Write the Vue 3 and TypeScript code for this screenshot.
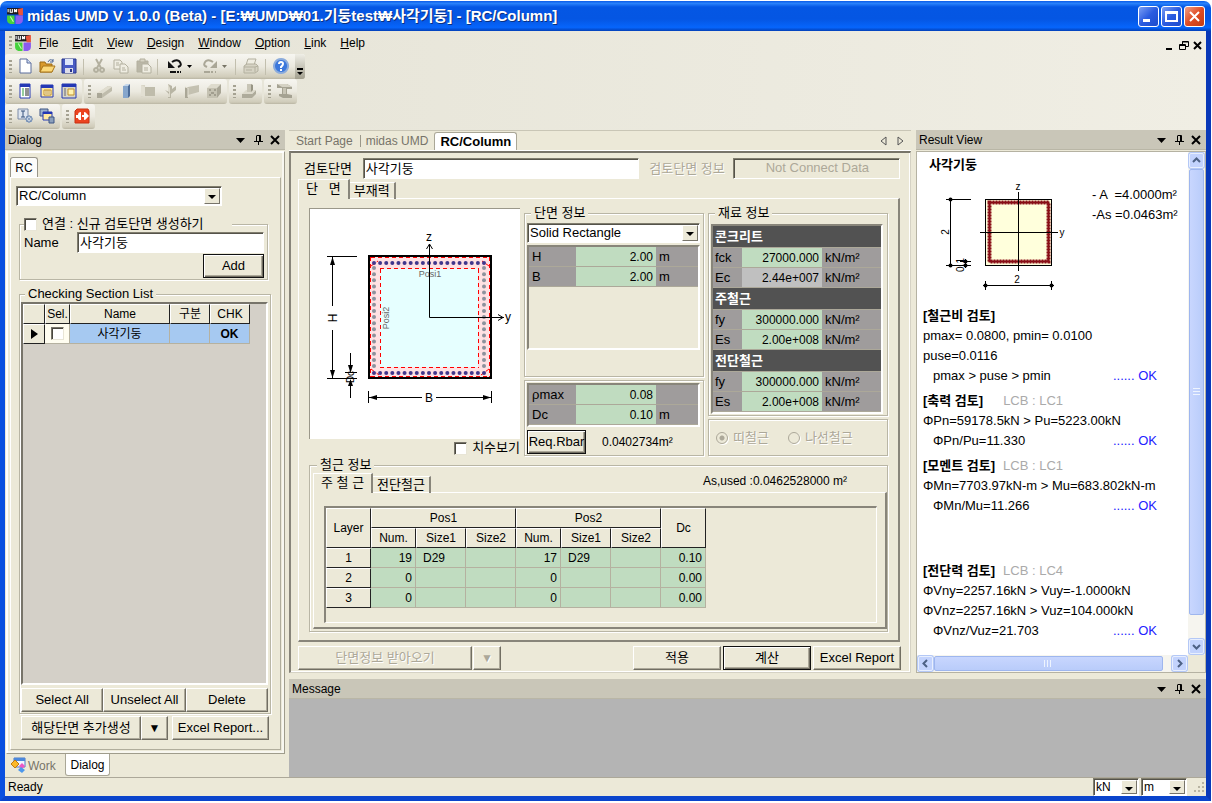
<script setup lang="ts">
import { ref } from 'vue'

type Shape = [d: string, fill: string, stroke?: string]
interface Tool { name: string; shapes: Shape[]; arrow?: boolean; sep?: boolean; off?: boolean }

const G = '#b3b09f'
const L = '#d6d3c4'
const N = 'none'

const logo: Shape[] = [
  ['M1 1h14v6H1z', '#1c1a1c'],
  ['M11 2l5-1v7h-4z', '#e8553c'],
  ['M1 8h7v8H4q-3-1-3-4z', '#46d23c'],
  ['M9 8h7v4q0 3-3 4H9z', '#8a5cf0'],
  ['M2 2v3M4 2v3h2v-3M8 5v-3l1 2l1-2v3', N, '#fff'],
  ['M4 9l3 5', N, '#c8ffb8'],
]

const mainTools: Tool[] = [
  { name: 'New', shapes: [['M3 1h7l4 4v10H3z', '#fff', '#5a6c9c'], ['M10 1v4h4', '#cfdcf4', '#5a6c9c']] },
  { name: 'Open', shapes: [['M1 4h5l1 2h6v8H1z', '#d99a2c', '#9c6a14'], ['M4 8h12l-3 6H1z', '#fbd878', '#a87418'], ['M9 4q2-4 5-1M14 1v3h-3', N, '#4a6494']] },
  { name: 'Save', sep: true, shapes: [['M1 1h14v14H1z', '#4a5cc4', '#27348c'], ['M4 1h8v6H4z', '#dfe7fb'], ['M4 10h8v5H4z', '#dcdce8'], ['M9 11h2v3H9z', '#27348c']] },
  { name: 'Cut', off: true, shapes: [['M5 1l5 9M11 1l-5 9', N, G], ['M5 10a2 2 0 1 0 .1 0zM11 10a2 2 0 1 0 .1 0z', N, G]] },
  { name: 'Copy', off: true, shapes: [['M1 2h6l2 2v7H1z', '#efede2', G], ['M7 6h5l3 3v6H7z', '#efede2', G], ['M3 5h3M3 7h3M9 10h3M9 12h4', N, G]] },
  { name: 'Paste', off: true, sep: true, shapes: [['M2 3h11v11H2z', '#bab7a7', G], ['M5 1h5v3H5z', L, G], ['M7 6h6l3 3v6H7z', '#efede2', G], ['M9 10h4M9 12h4', N, G]] },
  { name: 'Undo', arrow: true, shapes: [['M5 4q4-3 7-1q3 3 1 5l-2 1', N, '#111'], ['M1 3v7h7z', '#111'], ['M3 14h6M10 14h2M13 14h1', N, '#111']] },
  { name: 'Redo', arrow: true, sep: true, off: true, shapes: [['M11 4q-4-3-7-1q-3 3-1 5l2 1', N, '#aaa797'], ['M15 3v7H8z', '#aaa797'], ['M2 14h6M9 14h2M13 14h1', N, '#aaa797']] },
  { name: 'Print', sep: true, off: true, shapes: [['M5 1h8l-2 6H3z', '#efede2', G], ['M1 8l3-2h9l2 2v5l-3 2H1z', L, G], ['M1 9h11v5M12 9l3-1M3 12h6', N, G]] },
  { name: 'Help', shapes: [['M8 1a7 7 0 1 0 .1 0z', '#3c78dc', '#8cacdc'], ['M6 6q0-2 2-2t2 2q0 1-2 3v1M8 11v2', N, '#fff']] },
]

const viewTools: Tool[] = [
  { name: 'Tree view', shapes: [['M3 1h10v14H3z', '#fff', '#2438b4'], ['M3 1h10v3H3z', '#2438b4'], ['M5 6h2M5 8h2M5 10h2M5 12h2', N, '#2c9c3c'], ['M8 6h4M8 8h4M8 10h4M8 12h4', N, '#222']] },
  { name: 'Property view', shapes: [['M2 2h12v12H2z', '#ffe9a0', '#2438b4'], ['M2 2h12v3H2z', '#2438b4'], ['M5 7h7v5H5z', '#fffbe0', '#c0902c'], ['M6 8h5M6 10h5', N, '#c0902c']] },
  { name: 'Layout view', shapes: [['M1 1h14v14H1z', '#d9d6c4', '#2438b4'], ['M1 1h14v3H1z', '#2438b4'], ['M3 6h2M3 8h2M3 10h2M3 12h2', N, '#667'], ['M7 6h6v6H7z', '#fff3b0', '#c0902c']] },
]
const modelTools: Tool[] = [
  { name: 'Beam', off: true, shapes: [['M1 11l11-8l4 1v4L6 15H1z', '#bfbcac'], ['M1 10l11-7l4 1L6 11z', '#e0ddcf'], ['M1 10h5v5H1z', '#aaa797']] },
  { name: 'Column', shapes: [['M5 3l3-2h4l-2 2z', '#c4d6ea'], ['M5 3h5v12H5z', '#86a6cc'], ['M10 3l2-2v12l-2 2z', '#4c6c98']] },
  { name: 'Wall', off: true, shapes: [['M1 2h4v12H1z', '#d8d5c6'], ['M5 4h10v9H5z', '#bfbcab'], ['M1 2l4 2v10l-4-1z', '#e2dfd2']] },
  { name: 'Brace', off: true, shapes: [['M6 1l4 2v3l4-3v4l-5 4v4H6z', '#b8b5a4'], ['M6 1v13h2V5z', '#dedbcd'], ['M3 7l4 2v2z', G]] },
  { name: 'Slab', off: true, shapes: [['M1 4h3v11H1z', '#aaa797'], ['M4 4l11-2v7l-11 3z', '#c4c1b1'], ['M1 4l3 1v9', N, '#e6e3d6']] },
  { name: 'Footing', off: true, shapes: [['M1 5l4-4h10l-4 4z', '#dedbcd'], ['M11 5l4-4v9l-4 5z', '#a8a595'], ['M1 5h10v10H1z', '#c5c2b2'], ['M3 7h2M8 7h2M3 12h2M8 12h2M5 10h3', N, '#7e7b6c']] },
]
const baseTools: Tool[] = [
  { name: 'Base', off: true, shapes: [['M1 11h10l4-4v4l-4 4H1z', '#aeab9b'], ['M1 11l4-4h10l-4 4z', '#dcd9cb'], ['M6 1h4v8H6z', '#c8c5b6'], ['M10 1l2 1v5l-2 2z', '#989585']] },
]
const steelTools: Tool[] = [
  { name: 'Steel', off: true, shapes: [['M1 1h10l5 3v2h-5v5l5 1v3H7l-4-2v-2h3V5H1z', '#a5a292'], ['M1 1h10l5 3H6z', '#d5d2c4'], ['M7 5h3v6H7z', '#c8c5b6']] },
]
const dbTools: Tool[] = [
  { name: 'Section settings', shapes: [['M1 1h10v10H1z', '#dfe6f0', '#7c8ca8'], ['M4 3h4M6 3v6M4 9h4', N, '#34507c'], ['M12 8a3 3 0 1 0 .1 0z', '#fff', '#4c6c9c'], ['M8 11h8M12 7v8M9 8l6 6M15 8l-6 6', N, '#8ca4c4']] },
  { name: 'Cascade', shapes: [['M1 1h8v7H1z', '#9cb0cc', '#3c5484'], ['M4 4h9v8H4z', '#ffe9a0', '#2438b4'], ['M4 4h9v2H4z', '#2438b4'], ['M10 9h5v6h-5z', '#8ca0bc', '#3c5484']] },
]
const linkTools: Tool[] = [
  { name: 'Link', shapes: [['M3 1h11l1 2v12H1V3z', '#ec4420', '#c83010'], ['M7 4v8q-3 0-3-2H2V7h2q0-3 3-3zM10 4q2 0 3 2l2 2l-2 2q-1 2-3 2V9h-2V7h2z', '#fff']] },
]
const workIcon: Shape[] = [['M4 1h11v9H4z', '#eef4ff', '#4c78c4'], ['M4 1h11v3H4z', '#4c88dc'], ['M5 3l4 4l-4 4l-4-4z', '#fbb828', '#c07c10'], ['M12 6l3 3l-3 3l-3-3z', '#ec58c4'], ['M11 10l4 3l-3 3l-4-3z', '#4c98ec']]

const toolRows: Tool[][][] = [[mainTools], [viewTools, modelTools, baseTools, steelTools], [dbTools, linkTools]]
const menus = ['File', 'Edit', 'View', 'Design', 'Window', 'Option', 'Link', 'Help']

const sectionName = ref('사각기둥')
const newName = ref('사각기둥')

const dims = [['H', '2.00', 'm'], ['B', '2.00', 'm']]
const limits = [['ρmax', '0.08', ''], ['Dc', '0.10', 'm']]
const materials = [
  { title: '콘크리트', rows: [['fck', '27000.000'], ['Ec', '2.44e+007']] },
  { title: '주철근', rows: [['fy', '300000.000'], ['Es', '2.00e+008']] },
  { title: '전단철근', rows: [['fy', '300000.000'], ['Es', '2.00e+008']] },
]
const layers = [
  ['19', 'D29', '', '17', 'D29', '', '0.10'],
  ['0', '', '', '0', '', '', '0.00'],
  ['0', '', '', '0', '', '', '0.00'],
]
const checks = [
  { title: '[철근비 검토]', lcb: '', lines: ['pmax= 0.0800, pmin= 0.0100', 'puse=0.0116'], result: 'pmax > puse > pmin' },
  { title: '[축력 검토]', wide: true, lcb: 'LCB : LC1', lines: ['ΦPn=59178.5kN > Pu=5223.00kN'], result: 'ΦPn/Pu=11.330' },
  { title: '[모멘트 검토]', lcb: 'LCB : LC1', lines: ['ΦMn=7703.97kN-m > Mu=683.802kN-m'], result: 'ΦMn/Mu=11.266' },
  { title: '[전단력 검토]', last: true, lcb: 'LCB : LC4', lines: ['ΦVny=2257.16kN > Vuy=-1.0000kN', 'ΦVnz=2257.16kN > Vuz=104.000kN'], result: 'ΦVnz/Vuz=21.703' },
]
const hBars = Array.from({ length: 19 }, (_, i) => 65 + (i * 110) / 18)
const vBars = Array.from({ length: 17 }, (_, i) => 59 + (i * 98) / 16)
</script>

<template>
  <div class="window">
    <header class="titlebar">
      <svg class="ico" viewBox="0 0 17 17"><path v-for="(s, i) in logo" :key="i" :d="s[0]" :fill="s[1]" :stroke="s[2]" /></svg>
      <h1>midas UMD V 1.0.0 (Beta) - [E:₩UMD₩01.기둥test₩사각기둥] - [RC/Column]</h1>
      <button class="cap" aria-label="Minimize"><svg viewBox="0 0 19 19"><path d="M4 12h7v3H4z" fill="#fff" /></svg></button>
      <button class="cap" aria-label="Maximize"><svg viewBox="0 0 19 19"><path d="M4 5h11v9H4zM4 6h11" fill="none" stroke="#fff" stroke-width="2" /></svg></button>
      <button class="cap close" aria-label="Close"><svg viewBox="0 0 19 19"><path d="M5 5l9 9M14 5l-9 9" fill="none" stroke="#fff" stroke-width="2" /></svg></button>
    </header>

    <div class="client">
      <div class="bars">
        <nav class="menubar">
          <i class="grip"></i>
          <svg class="ico" viewBox="0 0 17 17"><path v-for="(s, i) in logo" :key="i" :d="s[0]" :fill="s[1]" :stroke="s[2]" /></svg>
          <button v-for="m in menus" :key="m"><u>{{ m[0] }}</u>{{ m.slice(1) }}</button>
          <span class="mdi">
            <button aria-label="Minimize document"><svg viewBox="0 0 12 12"><path d="M2 8h6v2H2z" /></svg></button>
            <button aria-label="Restore document"><svg viewBox="0 0 12 12"><path d="M4.500 4V1.500h6v5H8M4 2h6M1.500 4.500h6v5h-6zM2 5.500h6" fill="none" stroke="#000" /></svg></button>
            <button aria-label="Close document"><svg viewBox="0 0 12 12"><path d="M2 2l7 7M9 2l-7 7" stroke="#000" stroke-width="2" /></svg></button>
          </span>
        </nav>
        <div v-for="(row, r) in toolRows" :key="r" class="toolrow">
          <div v-for="(bar, b) in row" :key="b" class="toolbar" role="toolbar">
            <i class="grip"></i>
            <template v-for="t in bar" :key="t.name">
              <button :aria-label="t.name" :disabled="t.off" :class="{ drop: t.arrow }">
                <svg class="tico" viewBox="0 0 17 17"><path v-for="(s, i) in t.shapes" :key="i" :d="s[0]" :fill="s[1]" :stroke="s[2]" :stroke-width="t.arrow || t.name === 'Cut' || t.name === 'Help' ? 2 : 1" /></svg>
                <svg v-if="t.arrow" class="mini" viewBox="0 0 5 3"><path d="M0 0h5L2.500 3z" :fill="t.off ? '#777466' : '#000'" /></svg>
              </button>
              <i v-if="t.sep" class="sep"></i>
            </template>
            <button v-if="r === 0" class="more" aria-label="Toolbar options"><svg viewBox="0 0 8 8"><path d="M1 0h6v2H1zM1 4h6L4 7z" /></svg></button>
          </div>
        </div>
      </div>

      <main class="work">
        <aside class="left">
          <div class="panehead"><h2>Dialog</h2>
            <svg class="panebtns" viewBox="0 0 44 12"><path d="M0 4h9L4.500 9z" /><path d="M20.500 1.500h4v6M23.500 2v5M18 7.500h9M20.500 2v5M22.500 8v3" fill="none" stroke="#000" /><path d="M35 2l8 8M43 2l-8 8" stroke="#000" stroke-width="2" /></svg>
          </div>
          <div class="leftframe">
            <button class="rctab">RC</button>
            <div class="leftpage">
              <div class="combo main"><select aria-label="Module"><option>RC/Column</option></select><i></i></div>
              <fieldset class="newsec">
                <legend><input id="lnk" type="checkbox" class="box"><label for="lnk">연결 : 신규 검토단면 생성하기</label></legend>
                <div class="namerow"><label for="nm">Name</label><input id="nm" v-model="newName" class="text"></div>
                <button class="btn default add">Add</button>
              </fieldset>
              <fieldset class="seclist">
                <legend>Checking Section List</legend>
                <div class="listbox">
                  <table class="grid">
                    <colgroup><col class="c22"><col class="c25"><col class="c100"><col class="c40"><col class="c40"></colgroup>
                    <thead><tr><th></th><th>Sel.</th><th>Name</th><th>구분</th><th>CHK</th></tr></thead>
                    <tbody><tr><th><svg class="rowmark" viewBox="0 0 7 10"><path d="M0 0l7 5l-7 5z" /></svg></th><td class="cream"><input type="checkbox" class="box" aria-label="Select 사각기둥"></td><td>사각기둥</td><td></td><td><b>OK</b></td></tr></tbody>
                  </table>
                </div>
                <div class="btnrow three"><button class="btn">Select All</button><button class="btn">Unselect All</button><button class="btn">Delete</button></div>
              </fieldset>
              <div class="btnrow two"><button class="btn wide">해당단면 추가생성</button><button class="btn arrow" aria-label="More">▼</button><button class="btn report">Excel Report...</button></div>
            </div>
          </div>
          <div class="bottomtabs">
            <button><svg class="tico" viewBox="0 0 17 17"><path v-for="(s, i) in workIcon" :key="i" :d="s[0]" :fill="s[1]" :stroke="s[2]" /></svg>Work</button>
            <button class="on">Dialog</button>
          </div>
        </aside>

        <div class="rest">
          <div class="upper">
            <section class="center">
              <div class="doctabs">
                <button>Start Page</button><i></i><button>midas UMD</button><button class="on">RC/Column</button>
                <svg class="navs" viewBox="0 0 24 10"><path d="M6 1v8L1 5zM18 1v8l5-4z" fill="none" stroke="#555" /></svg>
              </div>
              <div class="doc">
                <div class="toprow">
                  <label for="sec">검토단면</label><input id="sec" v-model="sectionName" class="text">
                  <label for="info" class="dim">검토단면 정보</label><input id="info" class="text off" value="Not Connect Data" disabled>
                </div>
                <div class="tabs"><button class="on">단&nbsp;&nbsp;&nbsp;면</button><button>부재력</button></div>
                <div class="page">
                  <div class="cols">
                    <div class="drawcol">
                      <div class="canvas">
                        <svg viewBox="0 0 209 231" font-family="'Liberation Sans', sans-serif" font-size="12">
                          <rect x="60" y="47" width="122" height="122" fill="#ffe1e3" stroke="#000" stroke-width="2" />
                          <rect x="71" y="60" width="98" height="98" fill="#e6ffff" />
                          <path d="M62 48.500H181M62 167.500H181M61.500 48V168M180.500 48V168M71.500 60V158M169.500 60V158M71 59.500H170M71 158.500H170M62 57l7-5M180 57l-7-5M62 160l8 6M180 160l-8 6" fill="none" stroke="#f00" stroke-dasharray="4 3" />
                          <circle v-for="y in vBars" :key="'l' + y" cx="65" :cy="y" r="2" fill="#8d919c" />
                          <circle v-for="y in vBars" :key="'r' + y" cx="175" :cy="y" r="2" fill="#8d919c" />
                          <circle v-for="x in hBars" :key="'t' + x" :cx="x" cy="54" r="2" fill="#41368c" />
                          <circle v-for="x in hBars" :key="'b' + x" :cx="x" cy="164" r="2" fill="#41368c" />
                          <g fill="#666" font-size="9" text-anchor="middle"><text x="121" y="68">Posi1</text><text transform="translate(80 109) rotate(-90)">Posi2</text></g>
                          <path d="M120.500 35V108.500H195M117.500 40l3-5l3 5M189 105.500l5 3l-5 3" fill="none" stroke="#000" />
                          <path d="M18 47.500H48M18 169.500H48M23.500 48V97M23.500 121V169M41.500 144V160M41.500 175V189M36 163.500H48M59.500 182V194M182.500 182V194M60 188.500H113M127 188.500H182" fill="none" stroke="#000" />
                          <path d="M21 56l2.500-8l2.500 8zM21 161l2.500 8l2.500-8zM39 156l2.500 8l2.500-8zM39 177l2.500-7l2.500 7zM68 186v5l-8-2.500zM174 186v5l8-2.500z" />
                          <g text-anchor="middle"><text x="120" y="32">z</text><text x="199" y="112">y</text><text x="120" y="193">B</text><text transform="translate(28 109) rotate(-90)">H</text><text transform="translate(45 168) rotate(-90)" font-size="10">Dc</text></g>
                        </svg>
                      </div>
                      <div class="showdim"><input id="sd" type="checkbox" class="box"><label for="sd">치수보기</label></div>
                    </div>
                    <div class="propcol">
                      <fieldset class="f1">
                        <legend>단면 정보</legend>
                        <div class="combo"><select aria-label="Shape"><option>Solid Rectangle</option></select><i></i></div>
                        <div class="sunk tall"><table class="props"><tbody><tr v-for="d in dims" :key="d[0]"><th>{{ d[0] }}</th><td class="val">{{ d[1] }}</td><td>{{ d[2] }}</td></tr></tbody></table></div>
                      </fieldset>
                      <fieldset class="f2">
                        <div class="sunk"><table class="props"><tbody><tr v-for="d in limits" :key="d[0]"><th>{{ d[0] }}</th><td class="val">{{ d[1] }}</td><td>{{ d[2] }}</td></tr></tbody></table></div>
                        <div class="req"><button class="btn default">Req.Rbar</button><span>0.0402734m²</span></div>
                      </fieldset>
                    </div>
                    <div class="propcol">
                      <fieldset class="f3">
                        <legend>재료 정보</legend>
                        <div class="sunk"><table class="props mat">
                          <colgroup><col class="c29"><col class="c80"><col></colgroup>
                          <tbody v-for="m in materials" :key="m.title">
                            <tr><th colspan="3" class="sec">{{ m.title }}</th></tr>
                            <tr v-for="r in m.rows" :key="r[0]"><th>{{ r[0] }}</th><td class="val" :class="{ ro: r[0] === 'Ec' }">{{ r[1] }}</td><td>kN/m²</td></tr>
                          </tbody>
                        </table></div>
                      </fieldset>
                      <fieldset class="f4" disabled>
                        <input id="tie" type="radio" name="hoop" checked><label for="tie">띠철근</label>
                        <input id="spi" type="radio" name="hoop"><label for="spi">나선철근</label>
                      </fieldset>
                    </div>
                  </div>
                  <fieldset class="rebar">
                    <legend>철근 정보</legend>
                    <div class="rebarhead">
                      <div class="tabs"><button class="on">주 철 근</button><button>전단철근</button></div>
                      <output>As,used :0.0462528000 m²</output>
                    </div>
                    <div class="page inner">
                      <div class="sunk">
                        <table class="grid layers">
                          <colgroup><col class="c45"><col class="c45"><col class="c50"><col class="c50"><col class="c45"><col class="c50"><col class="c50"><col class="c45"></colgroup>
                          <thead>
                            <tr><th rowspan="2">Layer</th><th colspan="3">Pos1</th><th colspan="3">Pos2</th><th rowspan="2">Dc</th></tr>
                            <tr><th>Num.</th><th>Size1</th><th>Size2</th><th>Num.</th><th>Size1</th><th>Size2</th></tr>
                          </thead>
                          <tbody><tr v-for="(l, i) in layers" :key="i"><th>{{ i + 1 }}</th><td v-for="(c, j) in l" :key="j" :class="{ num: j % 3 === 0 }">{{ c }}</td></tr></tbody>
                        </table>
                      </div>
                    </div>
                  </fieldset>
                </div>
                <div class="actions">
                  <button class="btn fetch" disabled>단면정보 받아오기</button><button class="btn arrow" disabled aria-label="More">▼</button>
                  <span class="push"></span>
                  <button class="btn">적용</button><button class="btn default">계산</button><button class="btn">Excel Report</button>
                </div>
              </div>
            </section>

            <aside class="result">
              <div class="panehead"><h2>Result View</h2>
                <svg class="panebtns" viewBox="0 0 44 12"><path d="M0 4h9L4.500 9z" /><path d="M20.500 1.500h4v6M23.500 2v5M18 7.500h9M20.500 2v5M22.500 8v3" fill="none" stroke="#000" /><path d="M35 2l8 8M43 2l-8 8" stroke="#000" stroke-width="2" /></svg>
              </div>
              <div class="viewer">
                <article>
                  <h3>사각기둥</h3>
                  <div class="figure">
                    <svg viewBox="0 0 150 116" font-family="'Liberation Sans', sans-serif" font-size="10">
                      <rect x="55.500" y="18.500" width="66" height="66" fill="#ffffdc" stroke="#000" />
                      <rect x="59.500" y="21.500" width="59" height="59" fill="none" stroke="#7c0810" stroke-width="2" />
                      <rect x="59.500" y="21.500" width="59" height="59" fill="none" stroke="#8c1018" stroke-width="4" stroke-dasharray="2 1" />
                      <path d="M88.500 11V90M50 51.500H128M20.500 18V85M16 18.500H41M16 84.500H41M35.500 78V87M30 80.500H41M55.500 100V109M121.500 100V109M53 104.500H124" fill="none" stroke="#000" />
                      <g><circle cx="20.500" cy="18.500" r="2" /><circle cx="20.500" cy="84.500" r="2" /><circle cx="35.500" cy="80.500" r="2" /><circle cx="35.500" cy="84.500" r="2" /><circle cx="55.500" cy="104.500" r="2" /><circle cx="121.500" cy="104.500" r="2" /></g>
                      <g text-anchor="middle"><text x="88" y="9">z</text><text x="132" y="55">y</text><text x="87" y="102">2</text><text transform="translate(19 51) rotate(-90)">2</text><text transform="translate(34 84) rotate(-90)">0.1</text></g>
                    </svg>
                    <p>- A &nbsp;=4.0000m²<br>-As =0.0463m²</p>
                  </div>
                  <section v-for="c in checks" :key="c.title" :class="{ last: c.last }">
                    <h4 :class="{ wide: c.wide }">{{ c.title }}<span>{{ c.lcb }}</span></h4>
                    <p v-for="l in c.lines" :key="l">{{ l }}</p>
                    <p class="res"><span>{{ c.result }}</span><em>...... OK</em></p>
                  </section>
                </article>
                <div class="vbar"><button aria-label="Scroll up"><svg viewBox="0 0 9 9"><path d="M1 6l3.500-3.500L8 6" /></svg></button><i class="thumb"></i><button aria-label="Scroll down"><svg viewBox="0 0 9 9"><path d="M1 3l3.500 3.500L8 3" /></svg></button></div>
                <div class="hbar"><button aria-label="Scroll left"><svg viewBox="0 0 9 9"><path d="M6 1L2.500 4.500L6 8" /></svg></button><i class="thumb"></i><button aria-label="Scroll right"><svg viewBox="0 0 9 9"><path d="M3 1l3.500 3.500L3 8" /></svg></button></div>
                <div class="corner"></div>
              </div>
            </aside>
          </div>
          <section class="message">
            <div class="panehead"><h2>Message</h2>
              <svg class="panebtns" viewBox="0 0 44 12"><path d="M0 4h9L4.500 9z" /><path d="M20.500 1.500h4v6M23.500 2v5M18 7.500h9M20.500 2v5M22.500 8v3" fill="none" stroke="#000" /><path d="M35 2l8 8M43 2l-8 8" stroke="#000" stroke-width="2" /></svg>
            </div>
            <div class="msgbody"></div>
          </section>
        </div>
      </main>

      <footer class="status">
        <span>Ready</span>
        <div class="combo"><select aria-label="Force unit"><option>kN</option></select><i></i></div>
        <div class="combo"><select aria-label="Length unit"><option>m</option></select><i></i></div>
        <svg viewBox="0 0 13 13"><path d="M9 1h2v2H9zM5 5h2v2H5zM9 5h2v2H9zM1 9h2v2H1zM5 9h2v2H5zM9 9h2v2H9z" fill="#b8b4a2" /></svg>
      </footer>
    </div>
  </div>
</template>

<style>
html, body { margin: 0; background: #fff; }
</style>

<style scoped>
* { box-sizing: border-box; }
.window { height: 100vh; padding: 1px 1px 2px 0; display: flex; flex-direction: column; font: 13px/16px "Liberation Sans", "Noto Sans CJK KR", sans-serif; color: #000; }
.window button, .window input, .window select { font: inherit; color: inherit; margin: 0; padding: 0; }
button { background: none; border: 0; white-space: nowrap; }
h1, h2, h3, h4, p { margin: 0; font-size: inherit; }
fieldset { margin: 0; min-width: 0; padding: 0; border: 1px solid #b9b6a5; box-shadow: inset 1px 1px #fff, 1px 1px #fff; }
legend { background: #ece9d8; padding: 0 3px; margin-left: 4px; line-height: 16px; }
i { display: block; }

.titlebar { height: 30px; flex: none; display: flex; align-items: center; padding: 0 6px 0 6px; border-radius: 7px 7px 0 0; background: linear-gradient(#0a5be8, #2a82fb 8%, #0557e4 20%, #0556e3 60%, #0665fc 88%, #0340b8); }
.titlebar h1 { flex: 1; margin-left: 3px; color: #fff; font-size: 15px; font-weight: bold; text-shadow: 1px 1px #0a3080; white-space: nowrap; overflow: hidden; line-height: 20px; }
.ico { width: 18px; height: 18px; flex: none; }
.cap { width: 21px; height: 21px; border: 1px solid #fff; border-radius: 3px; background: linear-gradient(135deg, #7c9ff4, #2a5be0 50%, #1c4ccc); }
.window .cap { margin-left: 2px; }
.cap svg { display: block; width: 19px; height: 19px; }
.cap.close { background: linear-gradient(135deg, #f0a088, #e04c24 50%, #c43c14); }

.client { flex: 1; min-height: 0; display: flex; flex-direction: column; border: solid #0a50e0; border-width: 0 5px 5px; background: #ece9d8; border-right-color: #0838b8; border-bottom-color: #0a44cc; }
.bars { flex: none; background: linear-gradient(90deg, #e5e3d6, #f0eee4); padding-bottom: 1px; }
.menubar { height: 23px; display: flex; align-items: center; font-size: 12px; }
.window .menubar > button { padding: 0 7px; }
.mdi { margin-left: auto; display: flex; gap: 2px; margin-right: 2px; padding-top: 6px; }
.mdi svg { width: 12px; height: 12px; display: block; }
.grip { width: 3px; height: 13px; margin: 0 2px 0 4px; background: repeating-linear-gradient(#a5a292 0 2px, transparent 2px 4px); flex: none; }
.toolrow { display: flex; gap: 2px; }
.toolbar { height: 25px; display: flex; align-items: center; padding: 0 2px 0 0; border-radius: 3px; background: linear-gradient(#f7f6f1, #ebe9df 50%, #d0ccba 92%, #b9b5a3); }
.toolbar button { width: 22px; height: 22px; display: flex; align-items: center; justify-content: center; }
.window .toolbar .drop { width: 35px; gap: 3px; }
.tico { width: 17px; height: 17px; display: block; flex: none; }
.mini { width: 5px; height: 3px; }
.sep { width: 1px; height: 16px; margin: 0 4px 0 3px; background: #c2bfae; }
.window .toolbar .more { width: 10px; height: 25px; margin: 0 -2px 0 3px; border-radius: 0 3px 3px 0; background: linear-gradient(#efeee6, #a29f8e); align-items: flex-end; padding-bottom: 3px; }
.more svg { width: 8px; height: 8px; }

.work { flex: 1; min-height: 0; display: flex; gap: 4px; }
.panehead { height: 20px; flex: none; display: flex; align-items: center; justify-content: space-between; padding: 0 5px 0 3px; background: #c9c6b8; border-bottom: 1px solid #b9b6a6; }
.panehead h2 { font-size: 12px; font-weight: normal; }
.panebtns { width: 44px; height: 12px; }
.left { width: 280px; flex: none; display: flex; flex-direction: column; }
.leftframe { flex: 1; min-height: 0; margin: 1px 0 0 1px; padding: 5px 3px 3px; border: 1px solid #9f9c8c; border-left-color: #fff; border-top-color: #fff; display: flex; flex-direction: column; box-shadow: inset 1px 1px #fff, inset -2px -2px #f8f7f0; }
.rctab { align-self: flex-start; height: 20px; width: 28px; background: #fcfcfa; border: 1px solid #99968a; border-bottom: 0; border-radius: 3px 3px 0 0; }
.window .rctab { font-size: 12px; }
.leftpage { flex: 1; min-height: 0; display: flex; flex-direction: column; border: 1px solid #b0ad9c; border-top-color: #fff; border-left-color: #fff; padding: 8px 6px 9px 5px; }

.combo { position: relative; height: 20px; display: flex; background: #fff; border: 1px solid; border-color: #807d6e #fff #fff #807d6e; box-shadow: inset 1px 1px #55534a; }
.combo select { flex: 1; min-width: 0; appearance: none; border: 0; background: none; outline: 0; }
.window .combo select { padding-left: 2px; }
.combo i { position: absolute; right: 1px; top: 1px; bottom: 1px; width: 16px; pointer-events: none; background: #ece9d8; border: 1px solid; border-color: #fff #77746a #77746a #fff; }
.combo i::after { content: ""; position: absolute; left: 3px; top: 6px; border: solid transparent; border-width: 4px 4px 0; border-top-color: #000; }
.combo.main { width: 206px; flex: none; }
.text { height: 21px; min-width: 0; background: #fff; border: 1px solid; border-color: #807d6e #fff #fff #807d6e; box-shadow: inset 1px 1px #55534a; border-radius: 0; outline: 0; }
.window .text { padding: 0 0 2px 2px; }
.box { appearance: none; width: 13px; height: 13px; background: #fff; border: 1px solid; border-color: #77746a #e8e5d6 #e8e5d6 #77746a; box-shadow: inset 1px 1px #4a483f; flex: none; }
.btn { height: 24px; background: #ece9d8; border: 1px solid; border-color: #fff #716e62 #716e62 #fff; box-shadow: inset -1px -1px #aca899; }
.btn.default { border-color: #111; box-shadow: inset 1px 1px #fff, inset -1px -1px #716e62, inset -2px -2px #aca899; }
.window .btn:disabled { color: #aca899; text-shadow: 1px 1px #fff; }

.newsec { flex: none; margin: 10px 6px 0 3px; padding: 0 3px 1px 4px; }
.newsec legend { display: flex; align-items: center; gap: 5px; margin-left: 0; padding: 0 28px 0 0; }
.namerow { display: flex; align-items: center; }
.namerow label { width: 53px; }
.namerow .text { flex: 1; }
.window .add { display: block; width: 61px; margin: 1px 0 0 auto; }
.seclist { flex: 1; min-height: 0; margin: 6px 3px 0 3px; padding: 0 2px 1px 1px; display: flex; flex-direction: column; }
.listbox { flex: 1; min-height: 0; background: #d4d0c8; border: 2px solid; border-color: #77746a #fff #fff #77746a; }
.btnrow { display: flex; margin-top: 3px; flex: none; }
.btnrow.three .btn { flex: 1 1 0; }
.btnrow.two { margin: 2px 5px 0 5px; }
.btnrow .wide { flex: 1; }
.window .arrow { width: 27px; font-size: 12px; }
.window .report { width: 97px; margin-left: 4px; }

table { border-collapse: separate; border-spacing: 0; table-layout: fixed; }
.grid { font-size: 12px; line-height: 14px; width: 0; }
.grid th { font-weight: normal; height: 20px; padding: 0; background: #ece9d8; border: 1px solid; border-color: #fff #222 #222 #fff; text-align: center; overflow: hidden; }
.grid td { padding: 0; height: 20px; text-align: center; background: #a6c9f1; border: solid #b5b1a0; border-width: 0 1px 1px 0; }
.grid td.cream { background: #fffdf0; }
.grid .box { display: block; margin: 0 auto; }
.rowmark { display: block; width: 7px; height: 10px; margin: 0 auto; }
.c22 { width: 22px; } .c25 { width: 25px; } .c29 { width: 29px; } .c40 { width: 40px; } .c45 { width: 45px; } .c50 { width: 50px; } .c80 { width: 80px; } .c100 { width: 100px; }
.layers td { background: #c0dcc0; text-align: left; padding-left: 7px; }
.layers td.num { text-align: right; padding: 0 3px 0 0; }

.bottomtabs { height: 23px; flex: none; display: flex; padding-left: 5px; font-size: 12px; }
.window .bottomtabs button { color: #77746a; display: flex; align-items: center; width: 55px; gap: 1px; }
.window .bottomtabs .on { color: #000; background: #fff; width: 45px; height: 22px; border: 1px solid #aaa797; border-top: 0; justify-content: center; border-radius: 0 0 3px 3px; }

.rest { flex: 1; min-width: 0; display: flex; flex-direction: column; gap: 6px; }
.upper { flex: 1; min-height: 0; display: flex; gap: 5px; }
.center { flex: 1; min-width: 0; display: flex; flex-direction: column; }
.doctabs { height: 21px; flex: none; display: flex; align-items: center; padding-left: 7px; font-size: 12px; border-top: 1px solid #c9c6b6; }
.window .doctabs button { color: #77746a; }
.doctabs > i { width: 1px; height: 12px; background: #9b988a; margin: 0 5px 0 7px; }
.window .doctabs .on { align-self: flex-end; height: 19px; width: 83px; margin-left: 6px; background: #fff; color: #000; font-weight: bold; font-size: 13px; border: 1px solid #aaa797; border-bottom: 0; border-radius: 3px 3px 0 0; }
.navs { width: 24px; height: 10px; margin-left: auto; margin-right: 7px; }
.doc { flex: 1; min-height: 0; display: flex; flex-direction: column; border: 1px solid #d5d2c4; border-top: 2px solid #77746a; border-left: 2px solid #88857a; padding: 5px 10px 2px 7px; box-shadow: 0 -1px #fff, inset -1px -1px #fff; }
.toprow { display: flex; align-items: center; padding-left: 6px; flex: none; }
.window .toprow .text { flex: 277; margin-left: 11px; }
.dim { color: #aca899; text-shadow: 1px 1px #fff; margin-left: 10px; }
.window .toprow .off { flex: 166; margin-left: 8px; background: #ece9d8; color: #aca899; text-align: center; }
.tabs { display: flex; align-items: flex-end; position: relative; margin-bottom: -1px; height: 20px; flex: none; }
.window .tabs button { height: 17px; padding: 0 4px; border-top: 1px solid #fff; border-right: 2px solid #88857a; line-height: 14px; }
.window .tabs .on { height: 20px; padding: 0 7px 2px; background: #ece9d8; border-left: 1px solid #fff; }
.page { flex: 1; min-height: 0; border: solid; border-width: 1px 2px 2px 1px; border-color: #fff #88857a #88857a #fff; padding: 9px 10px 8px; display: flex; flex-direction: column; }
.cols { display: flex; gap: 4px; flex: none; }
.drawcol { flex: 1; min-width: 0; }
.canvas { background: #fff; height: 231px; border: solid #9b988a; border-width: 1px 0 0 1px; }
.canvas svg { display: block; width: 209px; height: 231px; margin-left: -1px; }
.showdim { display: flex; justify-content: flex-end; align-items: center; gap: 5px; margin-top: 1px; }
.propcol { width: 180px; flex: none; margin-top: -3px; display: flex; flex-direction: column; gap: 3px; }
.f1 { height: 172px; padding: 2px 3px 0 2px; }
.f1 .sunk { margin-top: 2px; }
.f2 { flex: 1; padding: 2px 3px 0 2px; }
.sunk { border: 2px solid; border-color: #88857a #fff #fff #88857a; }
.tall { height: 105px; }
.props { width: 100%; line-height: 18px; background: #9f9c9c; }
.props th, .props td { height: 20px; padding: 0 3px; text-align: left; font-weight: normal; border-bottom: 1px solid #aca899; }
.props th { width: 47px; }
.props .val { width: 80px; background: #c0dcc0; text-align: right; font-size: 12px; }
.props .val.ro { background: #c0c0c0; }
.props.mat th { width: auto; padding: 0 0 0 2px; }
.props.mat .sec { height: 22px; background: #525252; color: #fff; font-weight: bold; }
.req { display: flex; align-items: center; margin-top: 3px; font-size: 12px; gap: 16px; }
.window .req .btn { width: 59px; font-size: 13px; }
.f3 { padding: 3px 4px 1px 2px; }
.f4 { flex: 1; display: flex; align-items: center; color: #aca899; text-shadow: 1px 1px #fff; padding: 0 7px; }
.f4 input { appearance: none; width: 12px; height: 12px; border: 1px solid #aca899; border-radius: 6px; background: #ece9d8; box-shadow: 1px 1px #fff; }
.f4 input:checked { background: radial-gradient(#aca899 2px, #ece9d8 3px); }
.f4 label { margin: 0 19px 0 5px; }
.rebar { flex: 1; min-height: 0; margin-top: 1px; padding: 0 0 2px 3px; display: flex; flex-direction: column; }
.rebarhead { display: flex; justify-content: space-between; flex: none; font-size: 12px; }
.rebarhead .tabs { font-size: 13px; }
.rebarhead output { margin-right: 40px; }
.inner { padding: 13px 8px 4px 10px; }
.inner .sunk { flex: 1; min-height: 0; border-width: 2px 1px 1px 2px; }
.actions { display: flex; gap: 2px; margin-top: 4px; flex: none; margin-right: -1px; }
.actions .btn { width: 88px; }
.window .actions .fetch { width: 174px; margin-right: -1px; }
.window .actions .arrow { width: 28px; }
.push { flex: 1; }

.result { width: 290px; flex: none; display: flex; flex-direction: column; }
.viewer { flex: 1; min-height: 0; margin-top: 1px; display: grid; grid-template: 1fr 17px / 1fr 17px; border: 1px solid #b5b2a2; background: #fff; }
article { overflow: hidden; padding: 5px 0 0 6px; line-height: 20px; white-space: nowrap; }
article h3 { padding: 0 0 0 6px; line-height: 16px; }
.figure { display: flex; gap: 12px; padding-left: 7px; margin-top: 8px; }
.figure svg { width: 150px; height: 116px; margin-bottom: 9px; flex: none; }
.figure p { margin-top: 4px; }
article h4 { line-height: 20px; }
article h4 span { color: #aaa; font-weight: normal; margin-left: 8px; }
article h4.wide span { margin-left: 20px; }
article section { margin-bottom: 5px; }
article section.last { margin-top: 45px; }
.res { display: flex; justify-content: space-between; padding: 0 31px 0 10px; }
.res em { font-style: normal; color: #22f; }
.vbar, .hbar { display: flex; background: #f6f5ef; gap: 1px; padding: 1px; }
.vbar { flex-direction: column; }
.vbar button, .hbar button { width: 15px; height: 15px; flex: none; background: #c3d3fd; border: 1px solid #e8effe; border-radius: 2px; display: flex; align-items: center; justify-content: center; box-shadow: 0 0 0 1px #b4c8f6; }
.vbar svg, .hbar svg { width: 9px; height: 9px; fill: none; stroke: #4d6185; stroke-width: 2; }
.thumb { border: 1px solid #9eb6ee; border-radius: 2px; }
.vbar .thumb { flex: 1; margin-bottom: 23px; background: repeating-linear-gradient(#eef4fe 0 1px, transparent 1px 3px) center / 7px 9px no-repeat, linear-gradient(90deg, #c8d6fe, #b9ccfa); }
.hbar .thumb { flex: 1; margin-right: 8px; background: repeating-linear-gradient(90deg, #eef4fe 0 1px, transparent 1px 3px) center / 9px 7px no-repeat, linear-gradient(#c8d6fe, #b9ccfa); }
.corner { background: #ece9d8; }

.message { height: 98px; flex: none; display: flex; flex-direction: column; }
.msgbody { flex: 1; background: #b4b4b4; }
.status { height: 19px; flex: none; display: flex; align-items: center; font-size: 12px; padding-left: 3px; border-top: 1px solid #aca899; }
.status span { flex: 1; }
.status .combo { width: 46px; height: 18px; margin-left: 2px; }
.status svg { width: 13px; height: 13px; margin-left: 6px; }
</style>
